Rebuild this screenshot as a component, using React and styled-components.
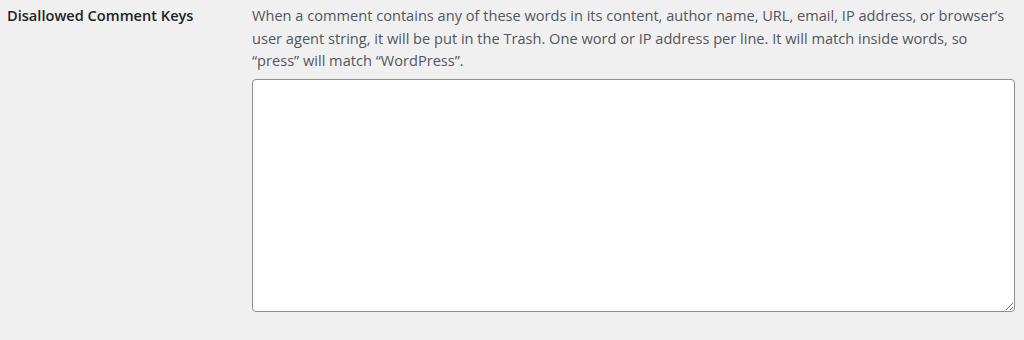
import React from "react";
import styled, { createGlobalStyle } from "styled-components";

const Global = createGlobalStyle`
  html, body { margin: 0; padding: 0; background: #f0f0f1; }
  body { font-family: "Open Sans", "Noto Sans", sans-serif; color: #1d2327; }
`;

const Row = styled.div`
  display: grid;
  grid-template-columns: 252px 763px;
  padding-top: 4px;
`;

const Label = styled.div`
  padding-left: 7px;
  font-size: 14.6px;
  font-weight: 600;
  line-height: 22px;
  color: #1d2327;
`;

const Field = styled.div`
  display: flex;
  flex-direction: column;
  gap: 7px;
`;

const Description = styled.p`
  margin: 0;
  font-size: 14.6px;
  line-height: 22.7px;
  color: #50575e;
`;

const Area = styled.textarea`
  box-sizing: border-box;
  width: 763px;
  height: 233px;
  border: 1px solid #8c8f94;
  border-radius: 4px;
  background: #fff;
  font: inherit;
  resize: both;
`;

export default function App() {
  return (
    <>
      <Global />
      <Row>
        <Label>Disallowed Comment Keys</Label>
        <Field>
          <Description>
            When a comment contains any of these words in its content, author name, URL, email, IP address, or browser’s user agent string, it will be put in the Trash. One word or IP address per line. It will match inside words, so “press” will match “WordPress”.
          </Description>
          <Area />
        </Field>
      </Row>
    </>
  );
}
